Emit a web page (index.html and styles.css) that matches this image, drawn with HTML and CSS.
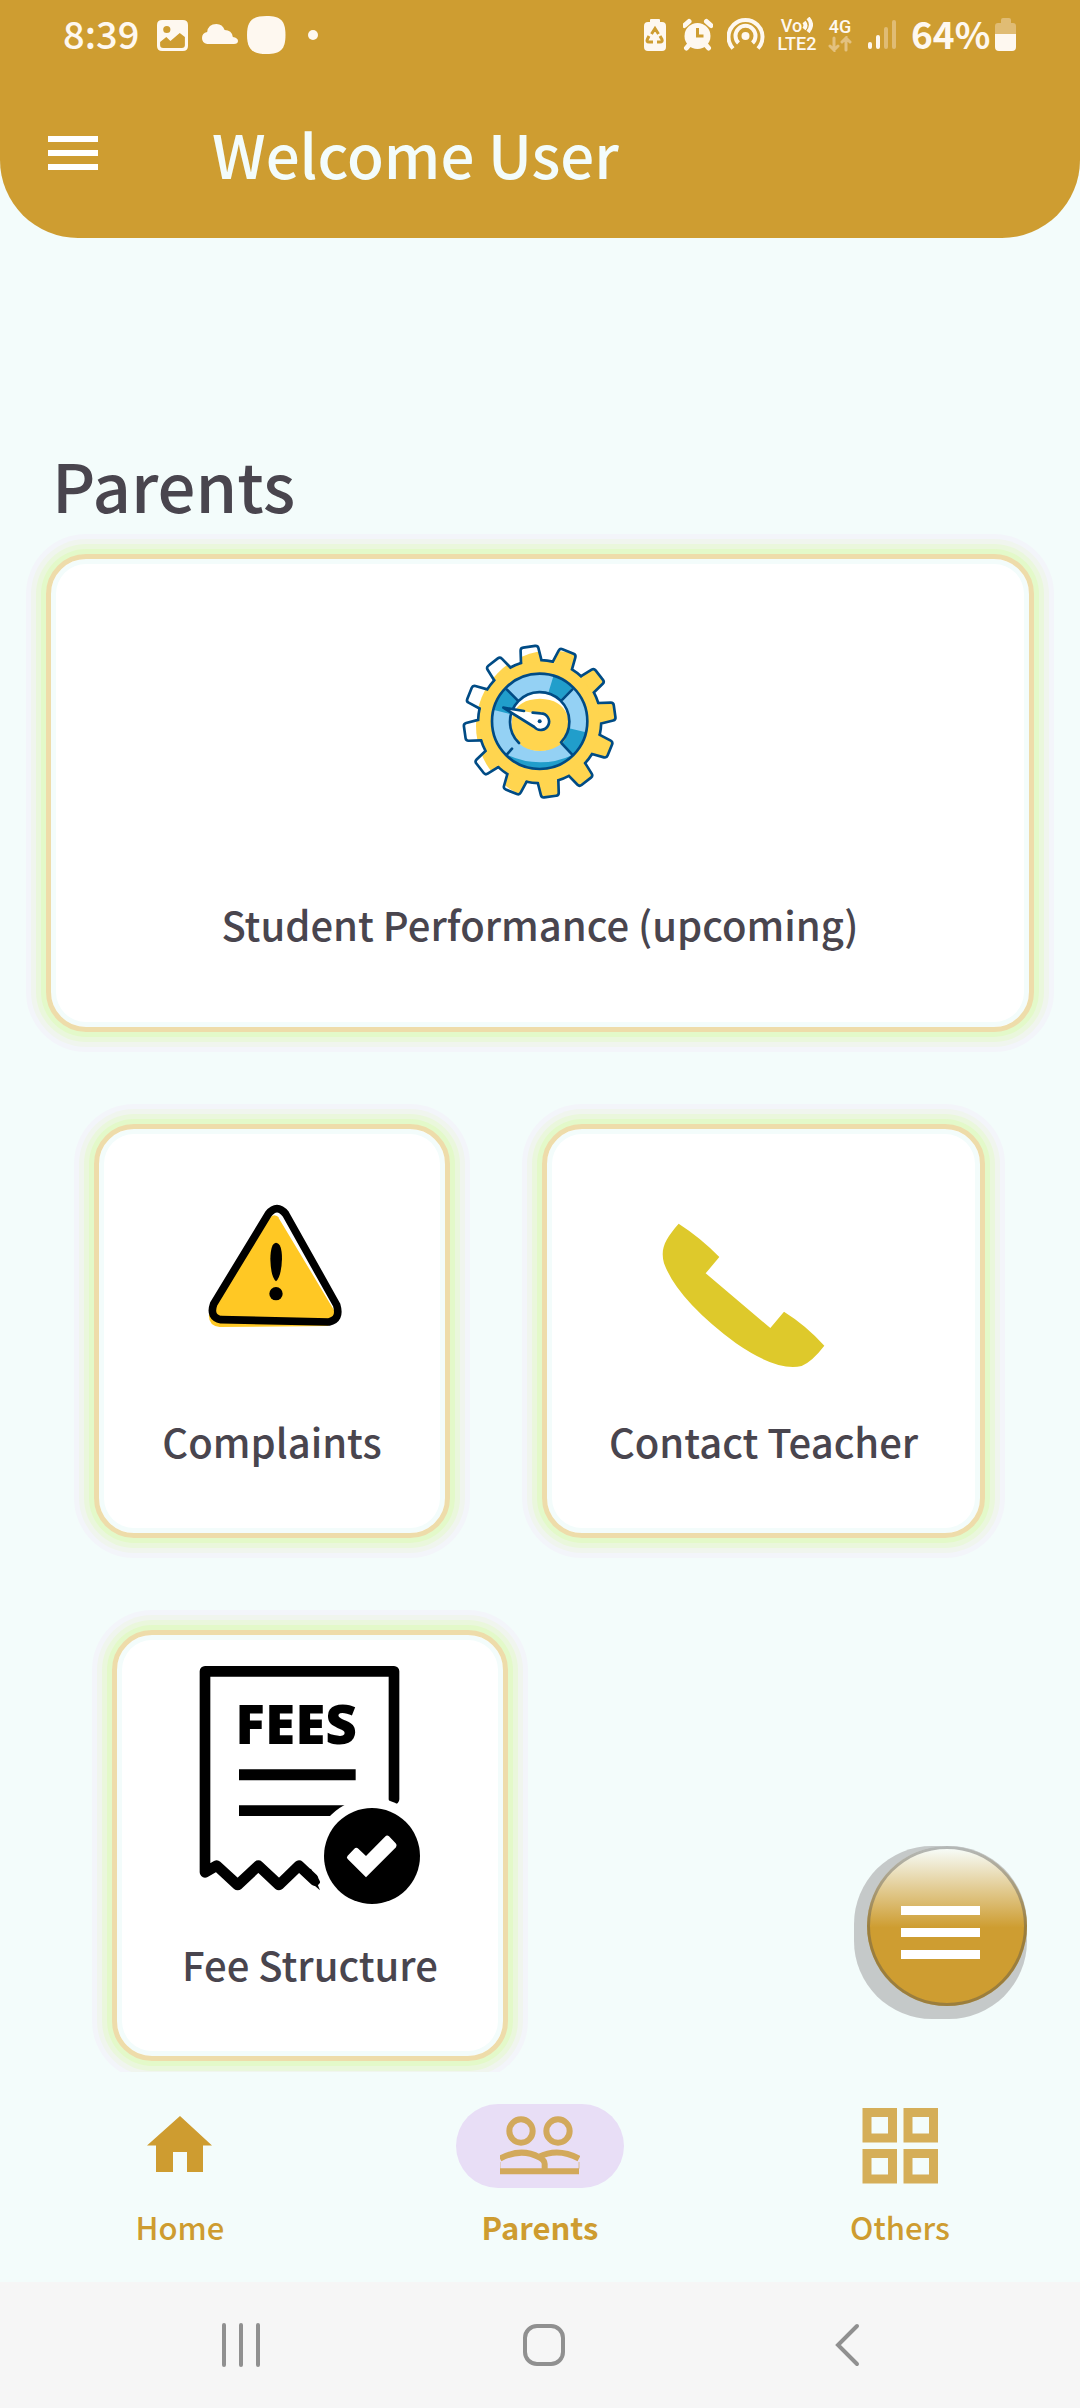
FILE: index.html
```html
<!DOCTYPE html>
<html lang="en">
<head>
<meta charset="utf-8">
<meta name="viewport" content="width=device-width">
<title>Parents</title>
<link rel="stylesheet" href="styles.css">
</head>
<body>
<div class="app">
  <header class="header">
    <div class="status">
      <div class="status-left">
        <span class="clock">8:39</span>
        <svg class="s-photo" width="31" height="70" viewBox="152 0 30 70" preserveAspectRatio="none"><path fill-rule="evenodd" d="M157 20h20q5 0 5 5v21q0 5-5 5h-20q-5 0-5-5V25q0-5 5-5zM161.500 26a3.500 3.500 0 1 0 0 7 3.500 3.500 0 1 0 0-7zM155 42v3q0 3 3 3h18q3 0 3-3v-8l-5-4-9 8-4-4z"/></svg>
        <svg class="s-cloud" width="36" height="70" viewBox="195 0 35 70" preserveAspectRatio="none"><path d="M200 44q-5-1-5-6t5-6q1-8 9-8 6 0 8 6 7 0 8 7 5 1 5 4t-4 3z"/></svg>
        <svg class="s-blob" width="39" height="70" viewBox="239 0 38 70" preserveAspectRatio="none"><path d="M258 16c14 0 18.500 5 18.500 19S272 54 258 54s-19-5-19-19 5-19 19-19z"/></svg>
        <svg class="s-dot" width="10" height="70" viewBox="298 0 10 70"><circle cx="303" cy="35" r="5"/></svg>
      </div>
      <div class="status-right">
        <svg width="22" height="70" viewBox="644 0 22 70"><path d="M650 22v-2q0-1 1-1h8q1 0 1 1v2h2q4 0 4 4v21q0 4-4 4h-14q-4 0-4-4V26q0-4 4-4z"/><g class="cut"><path d="M651.500 34l3.500-5.500 3.500 5.500M660 36l2 3.500q1 2.500-2 2.500h-3M653 42h-4q-3 0-1.500-3l1.500-3"/></g></svg>
        <svg class="s-alarm" width="30" height="70" viewBox="683 0 30 70"><circle cx="697.500" cy="36" r="13"/><path class="ln" d="M684.500 25.500l4.500-4M711 25.500l-4.500-4M689 45l-2.500 3M706 45l2.500 3"/><path class="cut" d="M697.500 28v8h6"/></svg>
        <svg class="s-hot" width="38" height="70" viewBox="727 0 38 70"><circle cx="745.500" cy="36" r="4"/><path class="ln thin" d="M733 48.500a17 17 0 1 1 25 0M738.500 43a10 10 0 1 1 14 0"/></svg>
        <span class="volte"><span>Vo<svg width="11" height="16" viewBox="0 0 11 16"><path class="ln thin" d="M2 5q3 3.500 0 7M6 1q6 6.500 0 14"/></svg></span><span>LTE2</span></span>
        <span class="net"><span>4G</span><svg width="24" height="16" viewBox="827 36 24 16"><path class="ln dim" d="M833 38v12l-4-4m4 4l4-4M845 50V38l-4 4m4-4l4 4"/></svg></span>
        <svg class="s-signal" width="28" height="70" viewBox="867 0 28 70"><rect x="867" y="42" width="4" height="7" rx="2"/><rect x="875" y="35" width="4" height="14" rx="2"/><rect class="faint" x="883" y="27" width="4" height="22" rx="2"/><rect class="faint" x="891" y="20" width="4" height="29" rx="2"/></svg>
        <span class="percent">64%</span>
        <svg width="22" height="70" viewBox="995 0 22 70"><path class="faint" d="M995 34v-8q0-3 3-3h3v-3q0-2 2-2h6q2 0 2 2v3h2q3 0 3 3v8z"/><path d="M995 34h21v13q0 4-4 4h-13q-4 0-4-4z"/></svg>
      </div>
    </div>
    <div class="toolbar">
      <button class="menu" aria-label="Menu"><i></i><i></i><i></i></button>
      <h1>Welcome User</h1>
    </div>
  </header>

  <main class="content">
    <h2>Parents</h2>
    <div class="rows">
      <a class="card wide" href="#performance">
        <svg width="200" height="200" viewBox="0 0 600 600">
          <defs>
            <path id="tooth" d="M-31-182L-27-219Q-26-227-18-227H18Q26-227 27-219L31-182A185 185 0 0 1 64-173"/>
            <g id="teeth">
              <use href="#tooth"/><use href="#tooth" transform="rotate(30)"/><use href="#tooth" transform="rotate(60)"/><use href="#tooth" transform="rotate(90)"/><use href="#tooth" transform="rotate(120)"/><use href="#tooth" transform="rotate(150)"/><use href="#tooth" transform="rotate(180)"/><use href="#tooth" transform="rotate(210)"/><use href="#tooth" transform="rotate(240)"/><use href="#tooth" transform="rotate(270)"/><use href="#tooth" transform="rotate(300)"/><use href="#tooth" transform="rotate(330)"/>
            </g>
            <clipPath id="sun"><circle cx="334" cy="318" r="226"/></clipPath>
            <clipPath id="ring"><circle cx="299" cy="304" r="143"/></clipPath>
          </defs>
          <g clip-path="url(#sun)" fill="#ffd54f"><circle cx="299" cy="305" r="184"/><use href="#teeth" transform="translate(299 305) rotate(-8)"/></g>
          <use href="#teeth" transform="translate(299 305) rotate(-8)" fill="none" stroke="#004b85" stroke-width="8" stroke-linecap="round"/>
          <circle cx="299" cy="304" r="143" fill="#219ecb"/>
          <g clip-path="url(#ring)" fill="#94d1f4">
            <path d="M299 304L190 195 299 120 355 120zM299 304L410 190 480 250 470 344zM299 304L130 262 130 370 200 404zM200 404L299 304 400 404Q300 450 200 404z"/>
          </g>
          <circle cx="299" cy="304" r="88" fill="#fff"/>
          <path d="M218 285Q234 238 300 236 364 238 382 285 396 360 350 380 300 406 250 380 205 350 218 285z" fill="#ffd54f"/>
          <g fill="none" stroke="#004b85" stroke-width="8" stroke-linecap="round">
            <circle cx="299" cy="304" r="143"/>
            <path d="M237 369A89 89 0 1 1 363 367M200 208L233 241M397 208L367 239M365 370L396 403M201 403L216 386"/>
          </g>
          <path d="M190 263L283 321A25 25 0 1 0 302 280L278 278z" fill="#fff"/>
          <path d="M252 273L190 263 283 321A25 25 0 1 0 302 280L278 278" fill="none" stroke="#004b85" stroke-width="8" stroke-linecap="round" stroke-linejoin="round"/>
          <circle cx="299" cy="304" r="6" fill="#004b85"/>
        </svg>
        <span class="label">Student Performance (upcoming)</span>
      </a>
      <div class="pair">
        <a class="card complaints" href="#complaints">
          <svg width="150" height="130" viewBox="410 330 450 390">
            <path d="M628 383Q643 367 658 385L818 648Q836 686 802 708L478 711Q443 708 446 672z" fill="#ffc824"/>
            <path d="M660 372Q668 370 674 384L822 646V662L655 384z" fill="#fff"/>
            <path d="M624 372Q650 340 676 372L829 645Q842 688 806 696L482 689Q446 682 460 642z" fill="none" stroke="#000" stroke-width="23" stroke-linejoin="round"/>
            <path d="M647 458Q665 460 665 506 663 560 647 574 631 560 630 506 631 460 647 458z"/><circle cx="647" cy="611" r="20"/>
          </svg>
          <span class="label">Complaints</span>
        </a>
        <a class="card contact" href="#contact">
          <svg width="220" height="150" viewBox="429 390 660 450"><path fill="#dec92b" d="M503 401Q570 444 625 501L584 550 778 714 819 665Q885 706 940 767 905 813 872 828 800 846 675 760 500 630 459 520C447 475 463 447 503 401z"/></svg>
          <span class="label">Contact Teacher</span>
        </a>
      </div>
      <a class="card fees" href="#fees">
        <svg width="240" height="250" viewBox="330 180 720 750">
          <path d="M942 598V214H375V817L410 797 473 855 535 797 597 855 657 797 705 842" fill="none" stroke="#000" stroke-width="32" stroke-linejoin="round" stroke-linecap="round"/>
          <path d="M477 508H827V541H477zM477 616H800V648H477z"/>
          <text class="fees-text" x="466" y="433">FEES</text>
          <circle cx="876" cy="768" r="174" fill="#fff"/>
          <path d="M693 806L720 871 660 820z"/>
          <circle cx="876" cy="768" r="144"/>
          <path d="M803 767L823 746Q829 740 835 746L858 768 915 710Q921 703 927 709L947 730Q953 736 948 742L858 832 803 777Q798 772 803 767z" fill="#fff"/>
        </svg>
        <span class="label">Fee Structure</span>
      </a>
    </div>
  </main>

  <nav class="tabs">
    <a href="#home"><span class="tab-icon"><svg width="66" height="84" viewBox="147 2104 66 84"><path d="M180 2116L212 2145.500H203V2172H187V2152H173V2172H156V2145.500H147z"/></svg></span>Home</a>
    <a href="#parents" class="active"><span class="tab-icon"><svg width="80" height="84" viewBox="180 42 240 252"><g fill="none" stroke="#d2a95b" stroke-width="18"><circle cx="243" cy="123" r="35"/><circle cx="354" cy="123" r="35"/><path d="M180 206Q243 172 298 202 314 210 314 222V240M296 201Q354 172 417 206M180 244H417"/></g><path d="M180 216V236M417 216V236" stroke="#d2a95b" stroke-width="2"/></svg></span>Parents</a>
    <a href="#others"><span class="tab-icon"><svg width="76" height="84" viewBox="861 2104 76 84"><path class="soft" fill="none" stroke-width="9" d="M866 2112.500h25.500v25.500H866zM907 2112.500h25.500v25.500H907zM866 2153.500h25.500v25.500H866zM907 2153.500h25.500v25.500H907z"/></svg></span>Others</a>
  </nav>

  <div class="sysnav">
    <button aria-label="Recent apps"><svg width="40" height="44" viewBox="0 0 40 44"><path d="M3 2v40M20 2v40M37 2v40"/></svg></button>
    <button aria-label="Home screen"><svg width="44" height="44" viewBox="0 0 44 44"><rect x="3" y="3" width="38" height="38" rx="12"/></svg></button>
    <button aria-label="Back"><svg width="26" height="44" viewBox="0 0 26 44"><path d="M23 3L4 22 23 41"/></svg></button>
  </div>

  <button class="fab" aria-label="Quick actions"><span class="fab-disc"><i></i><i></i><i></i></span></button>
</div>
</body>
</html>
```
FILE: styles.css
```css
* { box-sizing: border-box; }
body {
  margin: 0;
  background: #f3fcfb;
  color: #49454e;
  font-family: "Noto Sans CJK SC", "Noto Sans", sans-serif;
  font-weight: 500;
}
svg { display: block; flex: none; }
a { color: inherit; text-decoration: none; }
button { border: 0; padding: 0; background: none; }
.app {
  position: relative;
  min-height: 100vh;
  display: flex;
  flex-direction: column;
}

/* Header */
.header {
  height: 238px;
  background: #ce9d31;
  border-radius: 0 0 78px 78px;
  color: #f3fcfb;
}
.status {
  height: 70px;
  display: flex;
  justify-content: space-between;
  padding: 0 63px;
  color: #fef8f0;
  fill: #fef8f0;
}
.status-left, .status-right { display: flex; align-items: center; }
.clock { width: 94px; padding-bottom: 4px; font-size: 38px; line-height: 66px; }
.s-cloud { margin-left: 14px; }
.s-blob { margin-left: 9px; }
.s-dot { margin-left: 22px; }
.s-alarm { margin-left: 17px; }
.s-hot { margin-left: 14px; }
.cut { fill: none; stroke: #ce9d31; stroke-width: 3; }
.ln { fill: none; stroke: #fef8f0; stroke-width: 5; stroke-linecap: round; }
.thin { stroke-width: 4; stroke-linecap: butt; }
.dim { stroke: #e3c17f; stroke-width: 3; }
.faint { fill: #e0bc74; }
.volte, .net {
  display: flex;
  flex-direction: column;
  align-items: center;
  font: 500 18px/18px Roboto, sans-serif;
}
.volte { width: 40px; margin-left: 12px; }
.volte > span { display: flex; }
.net { width: 24px; margin-left: 11px; }
.s-signal { margin-left: 16px; }
.percent { width: 84px; margin-left: 15px; padding-bottom: 4px; font-size: 37px; line-height: 66px; font-weight: 700; white-space: nowrap; }
.toolbar {
  height: 166px;
  display: flex;
  align-items: center;
  gap: 114px;
  padding: 0 48px;
}
.menu { display: flex; flex-direction: column; gap: 8px; width: 50px; }
.menu i { height: 6px; background: #fff; }
h1 { margin: 0; font-size: 60px; line-height: 84px; font-weight: 500; }

/* Content */
.content { flex: 1; overflow: hidden; padding: 204px 0 11px; }
h2 { margin: 0 52px 28px; font-size: 67px; line-height: 84px; font-weight: 500; }
.rows { display: flex; flex-direction: column; gap: 92px; }
.card {
  display: flex;
  flex-direction: column;
  align-items: center;
  border: 5px solid #eedcaa;
  border-radius: 40px;
  background: #fff;
  box-shadow: inset 0 0 0 5px #f3fcfb, 0 0 0 5px #e3f9c9, 0 0 0 10px #eaf7dc, 0 0 0 15px #f0f5ee, 0 0 0 20px #f3f5fa;
}
.wide { margin: 0 46px; padding: 61px 0 77px; gap: 78px; }
.pair { display: flex; gap: 92px; padding: 0 95px 0 94px; }
.complaints { flex: 355 1 0; padding: 71px 0 66px; gap: 85px; }
.contact { flex: 444 1 0; padding: 91px 0 66px; gap: 45px; }
.fees { width: 396px; margin-left: 112px; padding: 25px 0 66px; gap: 28px; }
.label { font-size: 40px; line-height: 52px; white-space: nowrap; }
.fees-text { font: 800 165px "Open Sans", sans-serif; }

/* Bottom tabs */
.tabs { height: 210px; display: flex; padding-top: 32px; color: #ce9c30; fill: #ce9c30; }
.tabs a {
  flex: 1;
  display: flex;
  flex-direction: column;
  align-items: center;
  gap: 18px;
  font-size: 31px;
  line-height: 42px;
}
.tab-icon { width: 168px; height: 84px; display: flex; justify-content: center; border-radius: 42px; }
.active { font-weight: 700; }
.active .tab-icon { background: #e8def6; }
.soft { stroke: #d5ae58; }

/* System navigation */
.sysnav { height: 126px; display: flex; padding: 0 82px 0 90px; background: #f6f6f6; }
.sysnav button { flex: 1; display: flex; align-items: center; justify-content: center; }
.sysnav svg { fill: none; stroke: #909090; stroke-width: 4; stroke-linecap: round; }

/* Floating button */
.fab {
  position: absolute;
  right: 53px;
  bottom: 389px;
  width: 173px;
  height: 173px;
  border-radius: 78px;
  background: #c5c9c9;
  display: flex;
  justify-content: flex-end;
}
.fab-disc {
  width: 160px;
  height: 160px;
  border-radius: 50%;
  background: linear-gradient(#f8ffff, #ce9d31 51%);
  box-shadow: inset 0 0 0 3px rgba(80, 80, 80, .4);
  display: flex;
  flex-direction: column;
  align-items: center;
  padding: 60px 13px 0 0;
  gap: 13px;
}
.fab i { width: 79px; height: 9px; background: #fff; }
```
